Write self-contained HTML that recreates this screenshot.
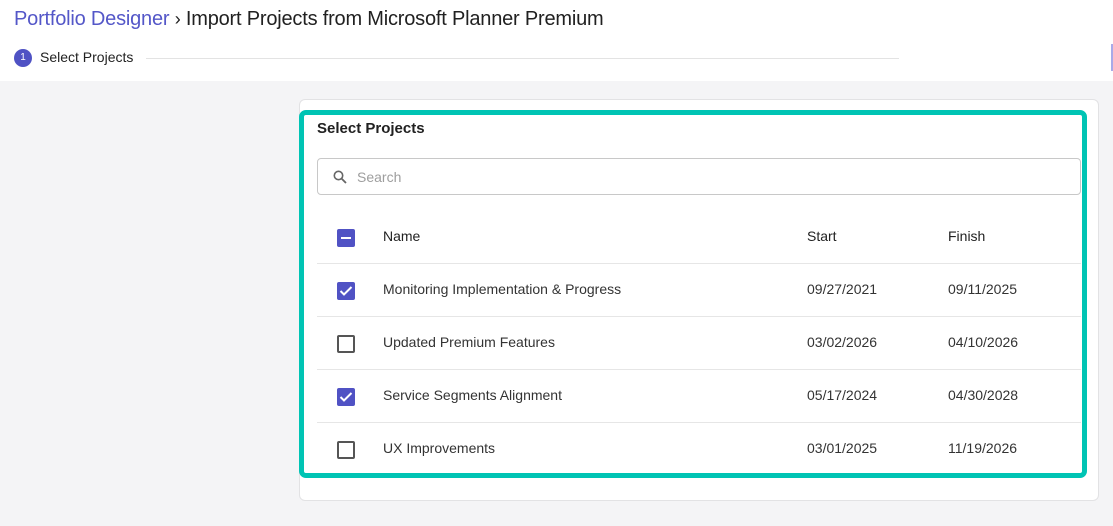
<!DOCTYPE html>
<html><head><style>
*{box-sizing:border-box;margin:0;padding:0}
body{width:1113px;height:526px;background:#f4f4f6;font-family:"Liberation Sans",sans-serif;position:relative;overflow:hidden;color:#212121}
.hdr{position:absolute;left:0;top:0;width:1113px;height:81px;background:#fff}
.t{position:absolute;left:14px;top:8px;font-size:20px;white-space:nowrap;letter-spacing:-0.2px}
.t .a{color:#5457c8}
.step{position:absolute;left:14px;top:49px;width:18px;height:18px;border-radius:50%;background:#4f52c4;color:#fff;font-size:10px;text-align:center;line-height:18px}
.sl{position:absolute;left:40px;top:49px;font-size:14px;color:#222}
.line{position:absolute;left:146px;top:58px;width:753px;height:1px;background:#e3e3e3}
.bar{position:absolute;left:1111px;top:44px;width:2px;height:27px;background:#a9aae8}
.card{position:absolute;left:299px;top:99px;width:800px;height:402px;background:#fff;border:1px solid #e2e2e4;border-radius:6px}
.hl{position:absolute;left:299px;top:110px;width:788px;height:368px;border:5px solid #00c4b4;border-radius:7px}
.h2{position:absolute;left:317px;top:120px;font-size:15px;font-weight:bold}
.search{position:absolute;left:317px;top:158px;width:764px;height:37px;border:1px solid #c8c8c8;border-radius:4px}
.search span{position:absolute;left:39px;top:10px;font-size:14px;color:#9e9e9e}
.row{position:absolute;left:317px;width:764px;height:53px;border-bottom:1px solid #e6e6e6;font-size:14px;color:#333}
.row div{position:absolute;top:17px}
.cb{position:absolute;left:20px;top:18px;width:18px;height:18px;border-radius:2px}
.on{background:#5052c4}
.off{border:2px solid #555}
</style></head><body>
<div class="hdr">
<div class="t"><span class="a">Portfolio Designer</span> <span style="font-size:18px">&#8250;</span> Import Projects from Microsoft Planner Premium</div>
<div class="step">1</div><div class="sl">Select Projects</div><div class="line"></div><div class="bar"></div>
</div>
<div class="card"></div>
<div class="hl"></div>
<div class="h2">Select Projects</div>
<div class="search"><svg style="position:absolute;left:15px;top:11px" width="14" height="14" viewBox="0 0 14 14"><circle cx="5.5" cy="5.5" r="4.2" fill="none" stroke="#666" stroke-width="1.6"/><path d="M8.6 8.6L13 13" stroke="#666" stroke-width="1.8"/></svg><span>Search</span></div>
<div class="row" style="top:211px;color:#222"><span class="cb on" style="top:18px"><svg width="18" height="18"><path d="M4 9h10" stroke="#fff" stroke-width="2"/></svg></span><div style="left:66px">Name</div><div style="left:490px">Start</div><div style="left:631px">Finish</div></div>
<div class="row" style="top:264px"><span class="cb on"><svg width="18" height="18"><path d="M3.5 9l3.5 3.5 7.5-7.5" fill="none" stroke="#fff" stroke-width="2"/></svg></span><div style="left:66px">Monitoring Implementation &amp; Progress</div><div style="left:490px">09/27/2021</div><div style="left:631px">09/11/2025</div></div>
<div class="row" style="top:317px"><span class="cb off"></span><div style="left:66px">Updated Premium Features</div><div style="left:490px">03/02/2026</div><div style="left:631px">04/10/2026</div></div>
<div class="row" style="top:370px"><span class="cb on"><svg width="18" height="18"><path d="M3.5 9l3.5 3.5 7.5-7.5" fill="none" stroke="#fff" stroke-width="2"/></svg></span><div style="left:66px">Service Segments Alignment</div><div style="left:490px">05/17/2024</div><div style="left:631px">04/30/2028</div></div>
<div class="row" style="top:423px;border:none"><span class="cb off"></span><div style="left:66px">UX Improvements</div><div style="left:490px">03/01/2025</div><div style="left:631px">11/19/2026</div></div>
</body></html>
